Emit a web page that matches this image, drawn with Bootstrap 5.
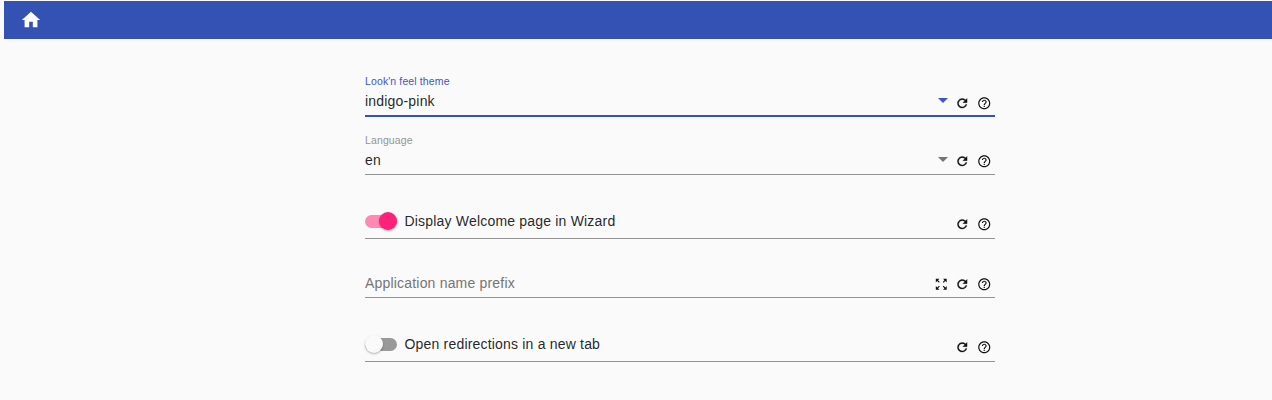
<!DOCTYPE html>
<html lang="en">
<head>
<meta charset="utf-8">
<meta name="viewport" content="width=device-width, initial-scale=1">
<title>Settings</title>
<link href="https://cdn.jsdelivr.net/npm/bootstrap@5.3.0/dist/css/bootstrap.min.css" rel="stylesheet">
<style>
body { background: #fafafa; font-family: "Liberation Sans", Arial, sans-serif; font-size: 14px; line-height: 16px; color: rgba(0,0,0,.87); overflow: hidden; }
svg { display: block; fill: currentColor; }
.topbar { height: 38px; margin: 1px 0 0 4px; background: #3452b4; padding: 0 0 0 16px; }
.settings { width: 630px; margin-left: 365px; }
.field { border-bottom: 1px solid #949494; letter-spacing: .19px; }
.field-theme { height: 78px; border-bottom: 2px solid #3452b4; padding-bottom: 6px; }
.field-lang { height: 58px; padding-bottom: 6px; }
.field-welcome { height: 64px; padding-bottom: 9px; }
.field-prefix { height: 59px; padding-bottom: 6px; }
.field-redirect { height: 64px; padding-bottom: 9px; }
.caption { font-size: 10.5px; line-height: 12px; letter-spacing: .12px; margin-bottom: 6px; color: #949494; }
.field-theme .caption, .field-theme .arrow { color: #3f56c0; }
.placeholder-text { color: #757575; }
.arrow { width: 10px; height: 5px; color: #757575; margin-right: 7px; margin-bottom: 6px; }
.tools { color: #111; gap: 7px; margin-right: 4px; margin-bottom: 0; }
.field-welcome .tools, .field-redirect .tools { margin-bottom: -2px; }
.field-theme .tools { margin-bottom: -1px; }
.tools svg { width: 14.5px; height: 14.5px; }
.switch-track { width: 32px; height: 13px; border-radius: 7px; background: #999; }
.switch-thumb { width: 18px; height: 18px; border-radius: 50%; background: #fafafa; box-shadow: 0 1px 2px rgba(0,0,0,.3); flex: none; }
.switch-track.on { background: #ff89b3; }
.switch-track.on .switch-thumb { background: #ff2079; }
.switch-label { margin-left: 7.5px; }
</style>
</head>
<body>
<svg class="d-none" xmlns="http://www.w3.org/2000/svg">
  <symbol id="refresh" viewBox="0 0 24 24"><path stroke="currentColor" stroke-width=".5" d="M17.65 6.35C16.2 4.9 14.21 4 12 4c-4.42 0-7.99 3.58-7.99 8s3.57 8 7.99 8c3.73 0 6.84-2.55 7.73-6h-2.08c-.82 2.33-3.04 4-5.65 4-3.31 0-6-2.69-6-6s2.69-6 6-6c1.66 0 3.14.69 4.22 1.78L13 11h7V4l-2.35 2.35z"/></symbol>
  <symbol id="help" viewBox="0 0 24 24"><path d="M11 18h2v-2h-2v2zm1-16C6.48 2 2 6.48 2 12s4.48 10 10 10 10-4.48 10-10S17.52 2 12 2zm0 18c-4.41 0-8-3.59-8-8s3.59-8 8-8 8 3.59 8 8-3.59 8-8 8zm0-14c-2.21 0-4 1.79-4 4h2c0-1.1.9-2 2-2s2 .9 2 2c0 2-3 1.75-3 5h2c0-2.25 3-2.5 3-5 0-2.21-1.79-4-4-4z"/></symbol>
  <symbol id="expand" viewBox="0 0 24 24"><path d="M15 3l2.3 2.3-2.89 2.87 1.42 1.42L18.7 6.7 21 9V3h-6zM3 9l2.3-2.3 2.87 2.89 1.42-1.42L6.7 5.3 9 3H3v6zm6 12l-2.3-2.3 2.89-2.87-1.42-1.42L5.3 17.3 3 15v6h6zm12-6l-2.3 2.3-2.87-2.89-1.42 1.42 2.89 2.87L15 21h6v-6z"/></symbol>
</svg>
<nav class="topbar d-flex align-items-center text-white">
  <svg width="22" height="22" viewBox="0 0 24 24"><path d="M10 20v-6h4v6h5v-8h3L12 3 2 12h3v8z"/></svg>
</nav>
<main class="settings">
  <div class="field field-theme d-flex align-items-end">
    <div class="flex-grow-1"><div class="caption">Look'n feel theme</div><div>indigo-pink</div></div>
    <svg class="arrow" viewBox="0 0 10 5"><path d="M0 0h10L5 5z"/></svg>
    <div class="tools d-flex"><svg><use href="#refresh"/></svg><svg><use href="#help"/></svg></div>
  </div>
  <div class="field field-lang d-flex align-items-end">
    <div class="flex-grow-1"><div class="caption">Language</div><div>en</div></div>
    <svg class="arrow" viewBox="0 0 10 5"><path d="M0 0h10L5 5z"/></svg>
    <div class="tools d-flex"><svg><use href="#refresh"/></svg><svg><use href="#help"/></svg></div>
  </div>
  <div class="field field-welcome d-flex align-items-end">
    <div class="d-flex align-items-center flex-grow-1"><div class="switch-track on d-flex align-items-center justify-content-end"><span class="switch-thumb"></span></div><div class="switch-label">Display Welcome page in Wizard</div></div>
    <div class="tools d-flex"><svg><use href="#refresh"/></svg><svg><use href="#help"/></svg></div>
  </div>
  <div class="field field-prefix d-flex align-items-end">
    <div class="flex-grow-1 placeholder-text">Application name prefix</div>
    <div class="tools d-flex"><svg><use href="#expand"/></svg><svg><use href="#refresh"/></svg><svg><use href="#help"/></svg></div>
  </div>
  <div class="field field-redirect d-flex align-items-end">
    <div class="d-flex align-items-center flex-grow-1"><div class="switch-track d-flex align-items-center"><span class="switch-thumb"></span></div><div class="switch-label">Open redirections in a new tab</div></div>
    <div class="tools d-flex"><svg><use href="#refresh"/></svg><svg><use href="#help"/></svg></div>
  </div>
</main>
<script src="https://cdn.jsdelivr.net/npm/bootstrap@5.3.0/dist/js/bootstrap.bundle.min.js"></script>
</body>
</html>
